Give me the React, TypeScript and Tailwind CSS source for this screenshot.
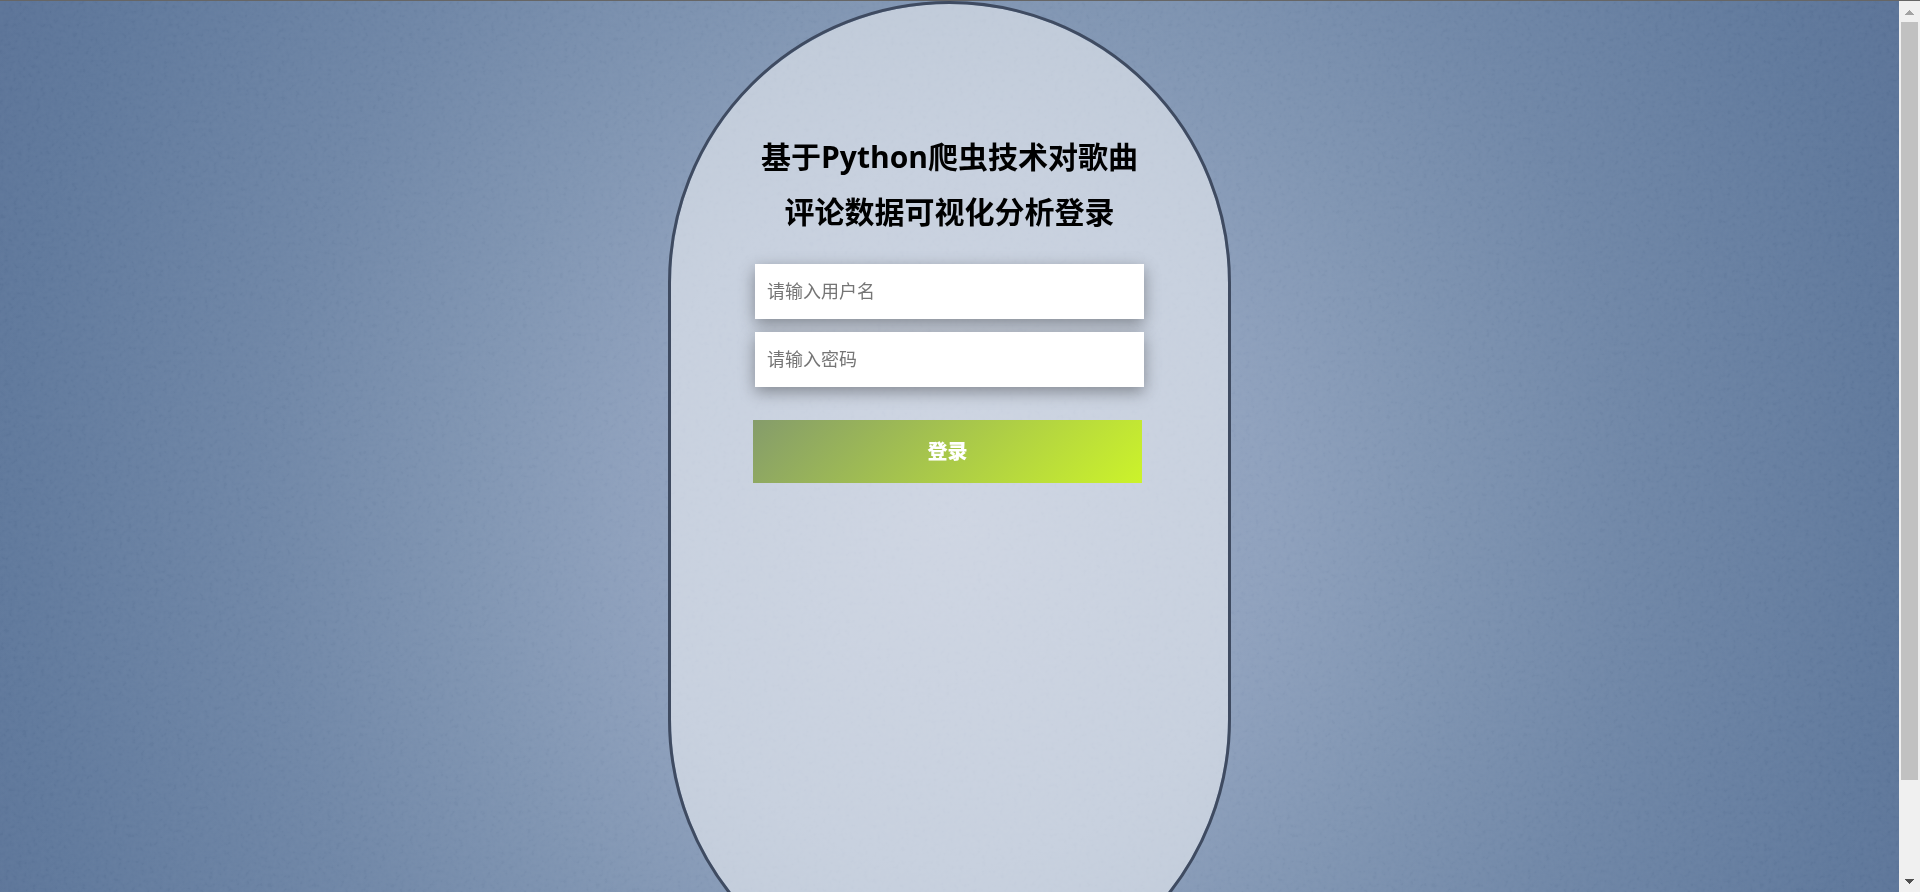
import { useState } from 'react';
import type { FormEvent, InputHTMLAttributes } from 'react';

// Shared look of the two text boxes
function Field({ label, ...props }: { label: string } & InputHTMLAttributes<HTMLInputElement>) {
  return (
    <input
      {...props}
      aria-label={label}
      placeholder={label}
      className="block h-[55px] w-full bg-white px-3 pb-0.5 text-lg text-black shadow-[0_5px_15px_rgba(0,0,0,0.35)] outline-none placeholder:text-[#757575]"
    />
  );
}

// Fine paper grain over the blue backdrop
function Grain() {
  return (
    <svg className="pointer-events-none absolute inset-0 h-full w-full opacity-5 mix-blend-soft-light" aria-hidden="true">
      <filter id="grain">
        <feTurbulence type="fractalNoise" baseFrequency="0.22" numOctaves="2" stitchTiles="stitch" />
        <feColorMatrix type="matrix" values="2 0 0 0 -0.5  2 0 0 0 -0.5  2 0 0 0 -0.5  0 0 0 0 1" />
      </filter>
      <rect width="100%" height="100%" filter="url(#grain)" />
    </svg>
  );
}

function ScrollRail() {
  return (
    <div className="flex w-[21px] shrink-0 flex-col items-center bg-[#f0f0f0]" aria-hidden="true">
      <svg className="h-[21px] w-[21px] shrink-0" viewBox="0 0 21 21" shapeRendering="crispEdges">
        <path d="M10 9h1v1h1v1h1v1h1v1h1v1H6v-1h1v-1h1v-1h1v-1h1z" fill="#a3a3a3" />
      </svg>
      <div className="flex w-[17px] flex-1 flex-col">
        <div className="h-[89.3%] bg-[#c1c1c1]" />
      </div>
      <svg className="h-[21px] w-[21px] shrink-0" viewBox="0 0 21 21" shapeRendering="crispEdges">
        <path d="M6 8h9v1h-1v1h-1v1h-1v1h-1v1h-1v-1H9v-1H8v-1H7V9H6z" fill="#505050" />
      </svg>
    </div>
  );
}

export default function App() {
  const [username, setUsername] = useState('');
  const [password, setPassword] = useState('');

  const onSubmit = (e: FormEvent) => e.preventDefault();

  return (
    <div className="flex h-screen flex-col border-t border-[#666666] font-['Open_Sans','Noto_Sans_CJK_SC',sans-serif]">
      <div className="flex min-h-0 flex-1">
        <main className="relative flex flex-1 items-start justify-center overflow-hidden bg-[radial-gradient(55%_130%_at_50%_58%,#9dabc5_0%,#8fa1bd_30%,#8095b2_46%,#7087a7_65%,#60799c_90%,#5c7498_100%)]">
          <Grain />
          <section className="relative min-h-[1000px] w-full max-w-[563px] rounded-full border-[3px] border-[#3f4b61] bg-white/50 bg-clip-padding px-[82px] pt-[125px]">
            <form onSubmit={onSubmit}>
              <div className="flex flex-col gap-[13px] px-[2px]">
                <h1 className="mb-3 text-center text-3xl leading-[55px] font-bold text-black">
                  基于Python爬虫技术对歌曲评论数据可视化分析登录
                </h1>
                <Field label="请输入用户名" type="text" value={username} onChange={(e) => setUsername(e.target.value)} />
                <Field label="请输入密码" type="password" value={password} onChange={(e) => setPassword(e.target.value)} />
              </div>
              <div className="mt-[33px] pr-1">
                <button
                  type="submit"
                  className="block h-[63px] w-full cursor-pointer bg-[linear-gradient(135deg,#859c6b,#ccf32a)] text-xl font-black text-white"
                >
                  登录
                </button>
              </div>
            </form>
          </section>
        </main>
        <ScrollRail />
      </div>
    </div>
  );
}
